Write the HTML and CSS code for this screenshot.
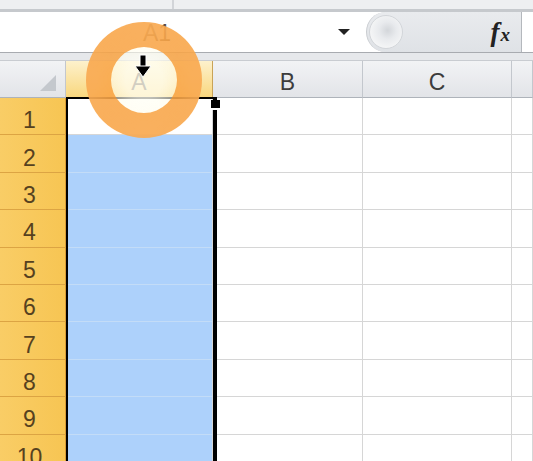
FILE: index.html
```html
<!DOCTYPE html>
<html lang="en">

<head>
  <meta charset="UTF-8" />
  <title>Sheet - column select</title>
  <meta name="viewport" content="width=device-width, initial-scale=1.0" />
  <link rel="stylesheet" href="styles.css">
</head>

<body>
  <div class="ribbon">
    <div class="ribbon-left"></div>
    <div class="ribbon-right"></div>
  </div>

  <div class="bar">
    <div class="name-box">
      <span class="name">A1</span>
      <span class="drop"></span>
    </div>
    <div class="fx-area">
      <span class="knob"></span>
      <span class="fx"><span class="fx-f">f</span><span class="fx-x">x</span></span>
    </div>
    <div class="formula-input"></div>
  </div>

  <div class="gap"></div>

  <div class="sheet">
    <div class="grid">
      <div class="corner"><span class="tri"></span></div>
      <div class="col-head active">A</div>
      <div class="col-head">B</div>
      <div class="col-head">C</div>
      <div class="col-head"></div>

      <div class="row-head">1</div><div class="cell cur"></div><div class="cell"></div><div class="cell"></div><div class="cell"></div>
      <div class="row-head">2</div><div class="cell sel"></div><div class="cell"></div><div class="cell"></div><div class="cell"></div>
      <div class="row-head">3</div><div class="cell sel"></div><div class="cell"></div><div class="cell"></div><div class="cell"></div>
      <div class="row-head">4</div><div class="cell sel"></div><div class="cell"></div><div class="cell"></div><div class="cell"></div>
      <div class="row-head">5</div><div class="cell sel"></div><div class="cell"></div><div class="cell"></div><div class="cell"></div>
      <div class="row-head">6</div><div class="cell sel"></div><div class="cell"></div><div class="cell"></div><div class="cell"></div>
      <div class="row-head">7</div><div class="cell sel"></div><div class="cell"></div><div class="cell"></div><div class="cell"></div>
      <div class="row-head">8</div><div class="cell sel"></div><div class="cell"></div><div class="cell"></div><div class="cell"></div>
      <div class="row-head">9</div><div class="cell sel"></div><div class="cell"></div><div class="cell"></div><div class="cell"></div>
      <div class="row-head">10</div><div class="cell sel"></div><div class="cell"></div><div class="cell"></div><div class="cell"></div>
    </div>

    <!-- selection outline over column A -->
    <div class="selection"><span class="handle"></span></div>
  </div>

  <!-- click highlight + column cursor -->
  <div class="ring"></div>
  <svg class="cursor" width="18" height="26" viewBox="0 0 18 26">
    <rect x="6" y="1" width="6" height="12" fill="#000" stroke="#fff" stroke-width="1" />
    <path d="M1 12 L17 12 L9 23 Z" fill="#000" stroke="#fff" stroke-width="1" />
  </svg>
</body>

</html>
```

FILE: styles.css
```css
* {
  box-sizing: border-box;
  margin: 0;
  padding: 0;
}

body {
  font-family: 'Liberation Sans', Arial, sans-serif;
  background: #fff;
  width: 533px;
  height: 461px;
  overflow: hidden;
  position: relative;
}

/* top ribbon strip */
.ribbon {
  height: 9px;
  display: flex;
  background: #eeeff1;
}

.ribbon-left {
  width: 174px;
  border-right: 2px solid #d2d4d8;
}

.ribbon-right {
  flex: 1;
}

/* name box + formula bar */
.bar {
  height: 44px;
  display: flex;
  border-top: 3px solid #c6c9cd;
  border-bottom: 1px solid #a8abb0;
  background: #fff;
}

.name-box {
  width: 366px;
  display: flex;
  align-items: center;
  background: #fff;
}

.name {
  width: 314px;
  text-align: center;
  font-size: 23px;
  color: #5a4a3a;
  padding-top: 2px;
}

.drop {
  margin-left: 24px;
  width: 0;
  height: 0;
  border-left: 6px solid transparent;
  border-right: 6px solid transparent;
  border-top: 6px solid #222;
}

.fx-area {
  width: 156px;
  position: relative;
  display: flex;
  align-items: center;
  justify-content: flex-end;
  padding-right: 11px;
  background: linear-gradient(#e9ebee, #dfe2e6);
  border-radius: 22px 0 0 22px;
  border-left: 1px solid #c9ccd0;
  border-right: 1px solid #b4b8bd;
}

.knob {
  position: absolute;
  left: 2px;
  top: 3px;
  width: 34px;
  height: 34px;
  border-radius: 50%;
  background: radial-gradient(circle at 55% 45%, #d3d6da 0, #e8eaed 35%, #f4f5f6 70%, #dcdfe3 100%);
  border: 1px solid #d3d6da;
}

.fx {
  font-family: 'Liberation Serif', 'Times New Roman', serif;
  font-style: italic;
  font-weight: bold;
  color: #222;
}

.fx-f {
  font-size: 27px;
  margin-right: 1px;
}

.fx-x {
  font-size: 19px;
}

.formula-input {
  flex: 1;
  background: #fff;
}

.gap {
  height: 8px;
  background: #e6e8eb;
  border-bottom: 1px solid #c9ccd1;
}

/* worksheet grid */
.sheet {
  position: relative;
}

.grid {
  display: grid;
  grid-template-columns: 66px 147px 150px 149px 21px;
  grid-template-rows: 37px;
  grid-auto-rows: 37.4px;
}

.corner,
.col-head {
  background: linear-gradient(#f2f3f5, #e2e4e8);
  border-right: 1px solid #c3c7cd;
  border-bottom: 1px solid #aeb3ba;
  display: flex;
  align-items: center;
  justify-content: center;
  font-size: 23px;
  color: #3c3c3c;
  padding-top: 7px;
}

.corner {
  position: relative;
}

.tri {
  position: absolute;
  right: 9px;
  bottom: 6px;
  width: 0;
  height: 0;
  border-left: 16px solid transparent;
  border-bottom: 16px solid #c4c8cd;
}

.col-head.active {
  background: linear-gradient(#fdf1cc, #f9d77e);
  border-right-color: #c9a357;
  border-bottom-color: #e0a13a;
  color: #4b3e2a;
}

.row-head {
  background: linear-gradient(90deg, #f9cd66, #f7c553);
  border-right: 1px solid #d89c35;
  border-bottom: 1px solid #dca443;
  display: flex;
  align-items: center;
  justify-content: center;
  font-size: 23px;
  color: #56411f;
  padding-top: 9px;
  padding-right: 6px;
}

.cell {
  border-right: 1px solid #d6d6d6;
  border-bottom: 1px solid #d6d6d6;
  background: #fff;
}

.cell.sel {
  background: #add1fb;
  border-bottom-color: #c3dcf7;
}

.selection {
  position: absolute;
  left: 66px;
  top: 36px;
  width: 151px;
  height: 400px;
  border-top: 2px solid #000;
  border-left: 2px solid #000;
  border-right: 4px solid #000;
}

.handle {
  position: absolute;
  right: -7px;
  top: 1px;
  width: 9px;
  height: 10px;
  background: #000;
  border-bottom: 2px solid #fff;
}

.ring {
  position: absolute;
  left: 86px;
  top: 22px;
  width: 116px;
  height: 116px;
  border-radius: 50%;
  border: 25px solid rgba(247, 148, 40, 0.74);
  background: radial-gradient(circle, rgba(255, 255, 245, 0.75) 40%, rgba(255, 250, 225, 0.45) 100%);
}

.cursor {
  position: absolute;
  left: 134px;
  top: 54px;
}
```
